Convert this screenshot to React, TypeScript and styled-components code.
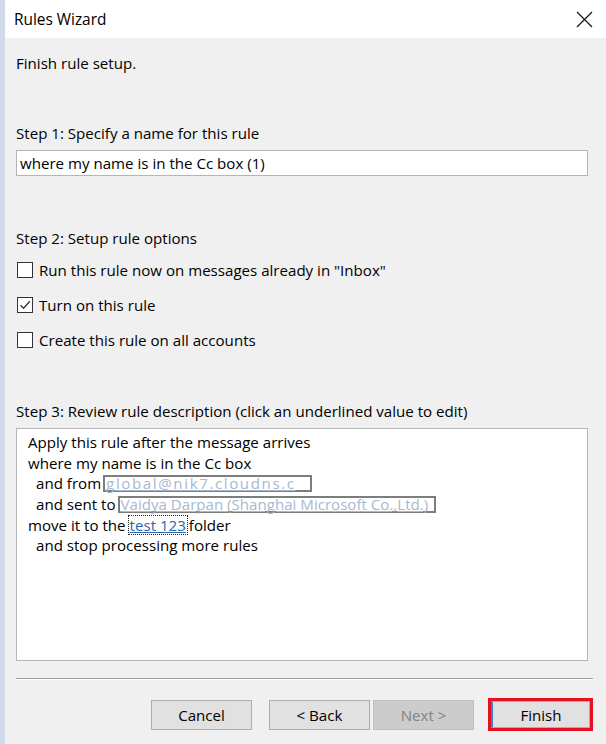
import * as React from "react";
import styled, { createGlobalStyle } from "styled-components";

const GlobalStyle = createGlobalStyle`
  html, body {
    margin: 0;
    padding: 0;
    background: #f0f0f0;
  }
  body {
    font-family: "Open Sans", "Noto Sans", "Liberation Sans", sans-serif;
    color: #000;
  }
`;

const Window = styled.div`
  width: 606px;
  height: 744px;
  box-sizing: border-box;
  border-left: 5px solid #cfdaea;
  background: #f0f0f0;
  display: flex;
  flex-direction: column;
  overflow: hidden;
`;

const TitleBar = styled.div`
  height: 38px;
  background: #fff;
  display: flex;
  align-items: center;
  justify-content: space-between;
  padding: 0 9px 0 9px;
  font-size: 15.4px;
`;

const CloseButton = styled.div`
  width: 20px;
  height: 20px;
  display: flex;
  align-items: center;
  justify-content: center;
  margin-right: 3px;
`;

const Body = styled.div`
  flex: 1;
  padding: 0 13px 0 11px;
  display: flex;
  flex-direction: column;
  font-size: 15.1px;
`;

const Label = styled.div<{ $top: number }>`
  margin-top: ${p => p.$top}px;
  height: 20px;
  line-height: 20px;
  white-space: nowrap;
`;

const NameInput = styled.div`
  margin-top: 7px;
  margin-right: 5px;
  height: 26px;
  box-sizing: border-box;
  border: 1px solid #b5b5b5;
  background: #fff;
  padding: 0 3px;
  line-height: 24px;
`;

const Options = styled.div`
  margin-top: 12px;
  display: flex;
  flex-direction: column;
  gap: 15px;
`;

const OptionRow = styled.label`
  display: flex;
  align-items: center;
  height: 20px;
  gap: 6px;
  padding-left: 1px;
`;

const Box = styled.span`
  width: 16px;
  height: 16px;
  box-sizing: border-box;
  border: 1px solid #333;
  background: #fff;
  display: flex;
  align-items: center;
  justify-content: center;
`;

const Description = styled.div`
  margin-top: 7px;
  margin-right: 5px;
  height: 233px;
  box-sizing: border-box;
  border: 1px solid #b5b5b5;
  background: #fff;
  padding: 3px 0 0 11px;
  line-height: 20.7px;
`;

const DescLine = styled.div<{ $indent?: boolean }>`
  white-space: nowrap;
  display: flex;
  align-items: center;
  height: 20.7px;
  padding-left: ${p => (p.$indent ? 8 : 0)}px;
`;

const HiddenValue = styled.span<{ $width: number; $spacing: number }>`
  display: inline-block;
  width: ${p => p.$width}px;
  height: 17px;
  line-height: 13px;
  box-sizing: border-box;
  border: 2px solid #7d7d7d;
  margin-left: 2px;
  padding-left: 1px;
  color: #a8b8cf;
  text-decoration: underline;
  letter-spacing: ${p => p.$spacing}px;
`;

const FolderLink = styled.span`
  display: inline-block;
  height: 20px;
  line-height: 18px;
  box-sizing: border-box;
  border: 1px dotted #222;
  padding: 0 1px;
  margin: 0 1px 0 2px;
  color: #2a66ad;
  text-decoration: underline;
`;

const Separator = styled.div`
  margin-top: 17px;
  height: 1px;
  background: #a0a0a0;
  border-bottom: 1px solid #fdfdfd;
`;

const ButtonRow = styled.div`
  margin-top: 18px;
  display: flex;
  justify-content: flex-end;
  align-items: center;
`;

const Button = styled.div<{ $disabled?: boolean; $gap: number }>`
  width: 101px;
  height: 30px;
  box-sizing: border-box;
  margin-left: ${p => p.$gap}px;
  border: 1px solid ${p => (p.$disabled ? "#bfbfbf" : "#adadad")};
  background: ${p => (p.$disabled ? "#cccccc" : "#e1e1e1")};
  color: ${p => (p.$disabled ? "#838383" : "#000")};
  display: flex;
  align-items: center;
  justify-content: center;
`;

const Highlight = styled.div`
  margin-left: 14px;
  width: 105px;
  height: 33px;
  box-sizing: border-box;
  border: 3px solid #e81123;
  display: flex;
`;

const FinishButton = styled.div`
  flex: 1;
  box-sizing: border-box;
  border: 1px solid #adadad;
  border-left: 2px solid #3c7fd0;
  background: #e1e1e1;
  display: flex;
  align-items: center;
  justify-content: center;
`;

const Check = () => (
  <svg width="12" height="12" viewBox="0 0 12 12">
    <path d="M1.5 6.2 L4.6 9.3 L10.8 2.2" fill="none" stroke="#333" strokeWidth="1.3" />
  </svg>
);

const CloseIcon = () => (
  <svg width="17" height="17" viewBox="0 0 17 17">
    <path d="M1 1 L16 16 M16 1 L1 16" stroke="#111" strokeWidth="1.2" />
  </svg>
);

const options = [
  { text: 'Run this rule now on messages already in "Inbox"', checked: false },
  { text: "Turn on this rule", checked: true },
  { text: "Create this rule on all accounts", checked: false }
];

const App: React.FunctionComponent = () => {
  return (
    <Window>
      <GlobalStyle />
      <TitleBar>
        <span>Rules Wizard</span>
        <CloseButton>
          <CloseIcon />
        </CloseButton>
      </TitleBar>
      <Body>
        <Label $top={15}>Finish rule setup.</Label>
        <Label $top={50}>Step 1: Specify a name for this rule</Label>
        <NameInput>where my name is in the Cc box (1)</NameInput>
        <Label $top={52}>Step 2: Setup rule options</Label>
        <Options>
          {options.map(option => (
            <OptionRow key={option.text}>
              <Box>{option.checked && <Check />}</Box>
              {option.text}
            </OptionRow>
          ))}
        </Options>
        <Label $top={51}>
          Step 3: Review rule description (click an underlined value to edit)
        </Label>
        <Description>
          <DescLine>Apply this rule after the message arrives</DescLine>
          <DescLine>where my name is in the Cc box</DescLine>
          <DescLine $indent>
            and from
            <HiddenValue $width={209} $spacing={1.6}>
              global@nik7.cloudns.c
            </HiddenValue>
          </DescLine>
          <DescLine $indent>
            and sent to
            <HiddenValue $width={318} $spacing={0}>
              Vaidya Darpan (Shanghai Microsoft Co.,Ltd.)
            </HiddenValue>
          </DescLine>
          <DescLine>
            move it to the<FolderLink>test 123</FolderLink>folder
          </DescLine>
          <DescLine $indent>and stop processing more rules</DescLine>
        </Description>
        <Separator />
        <ButtonRow>
          <Button $gap={0}>Cancel</Button>
          <Button $gap={17}>&lt; Back</Button>
          <Button $gap={3} $disabled>
            Next &gt;
          </Button>
          <Highlight>
            <FinishButton>Finish</FinishButton>
          </Highlight>
        </ButtonRow>
      </Body>
    </Window>
  );
};

export default App;
